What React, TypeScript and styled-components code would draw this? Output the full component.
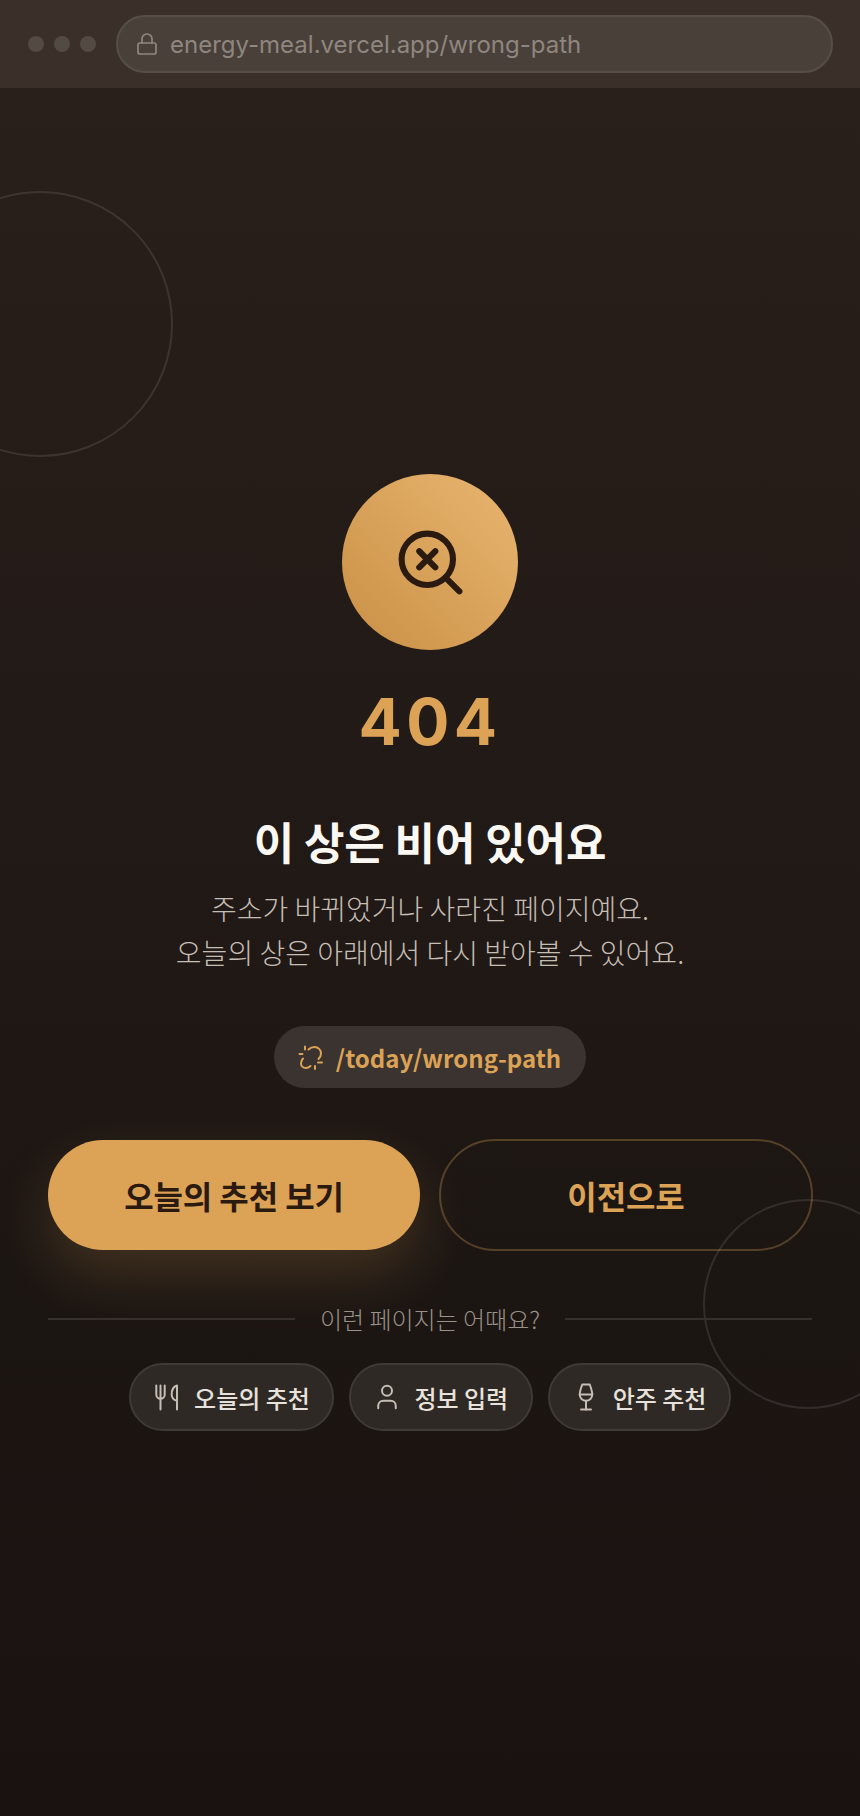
import React from "react";
import styled, { createGlobalStyle } from "styled-components";
import { Lock, SearchX, User, Wine } from "lucide-react";

const Global = createGlobalStyle`
  html, body { margin: 0; padding: 0; background: #1a1210; }
  * { box-sizing: border-box; }
`;

const Page = styled.div`
  position: relative;
  width: 860px;
  height: 1816px;
  overflow: hidden;
  display: flex;
  flex-direction: column;
  background: linear-gradient(180deg, #2a201b 0%, #1c1613 70%, #1a1210 100%);
  font-family: Inter, "Noto Sans CJK KR", sans-serif;
`;

const Ring = styled.div<{ $size: number; $left: number; $top: number }>`
  position: absolute;
  width: ${(p) => p.$size}px;
  height: ${(p) => p.$size}px;
  left: ${(p) => p.$left}px;
  top: ${(p) => p.$top}px;
  border-radius: 50%;
  border: 2px solid rgba(255, 255, 255, 0.1);
  pointer-events: none;
`;

const BrowserBar = styled.div`
  height: 88px;
  flex: none;
  display: flex;
  align-items: center;
  gap: 20px;
  padding: 0 27px 0 28px;
  background: #3a2f29;
`;

const Dots = styled.div`
  display: flex;
  gap: 10px;
`;

const Dot = styled.span`
  width: 16px;
  height: 16px;
  border-radius: 50%;
  background: #544a44;
`;

const Address = styled.div`
  flex: 1;
  height: 58px;
  display: flex;
  align-items: center;
  gap: 11px;
  padding: 0 17px;
  border-radius: 29px;
  background: #4a403a;
  border: 2px solid #574e48;
  color: #8f867f;
  font-size: 24px;
  svg { color: #8f867f; }
`;

const Main = styled.main`
  position: relative;
  display: flex;
  flex-direction: column;
  align-items: center;
  padding: 386px 48px 0;
`;

const Medal = styled.div`
  width: 176px;
  height: 176px;
  border-radius: 50%;
  display: flex;
  align-items: center;
  justify-content: center;
  background: linear-gradient(225deg, #e9b670 0%, #c98f45 100%);
  color: #2a1a10;
`;

const Code = styled.div`
  margin-top: 30px;
  font-size: 64px;
  line-height: 84px;
  font-weight: 750;
  letter-spacing: 4.5px;
  color: #dca256;
`;

const Title = styled.h1`
  margin: 47px 0 0;
  font-family: "Noto Sans CJK KR", sans-serif;
  font-size: 44px;
  line-height: 60px;
  font-weight: 700;
  letter-spacing: -0.1px;
  color: #fbf7f2;
`;

const Lead = styled.p`
  margin: 15px 0 0;
  font-family: "Noto Sans CJK KR", sans-serif;
  font-size: 28px;
  line-height: 44px;
  font-weight: 300;
  text-align: center;
  letter-spacing: 0.02px;
  color: #c6bdb5;
`;

const PathChip = styled.div`
  margin-top: 52px;
  height: 62px;
  display: flex;
  align-items: center;
  gap: 12px;
  padding: 0 25px 0 24px;
  border-radius: 31px;
  background: #3a332f;
  font-family: "Noto Sans CJK KR", sans-serif;
  font-size: 24px;
  font-weight: 700;
  color: #dca256;
`;

const Actions = styled.div`
  align-self: stretch;
  margin-top: 52px;
  display: grid;
  grid-template-columns: 1fr 1fr;
  gap: 20px;
`;

const Button = styled.button<{ $primary?: boolean }>`
  height: ${(p) => (p.$primary ? "110px" : "112px")};
  margin: ${(p) => (p.$primary ? "0" : "-1px")};
  border-radius: 56px;
  font-family: "Noto Sans CJK KR", sans-serif;
  font-size: 32px;
  font-weight: 700;
  letter-spacing: -0.1px;
  color: ${(p) => (p.$primary ? "#2a1a10" : "#dca256")};
  background: ${(p) => (p.$primary ? "#dca256" : "transparent")};
  border: ${(p) => (p.$primary ? "none" : "2px solid rgba(220, 162, 86, 0.3)")};
  box-shadow: ${(p) => (p.$primary ? "0 24px 56px rgba(220, 162, 86, 0.2)" : "none")};
`;

const DividerRow = styled.div`
  align-self: stretch;
  margin-top: 51px;
  display: flex;
  align-items: center;
  gap: 25px;
  font-family: "Noto Sans CJK KR", sans-serif;
  font-size: 24px;
  line-height: 36px;
  font-weight: 300;
  color: #9a9188;
`;

const Rule = styled.span`
  flex: 1;
  height: 2px;
  background: #35302c;
`;

const Links = styled.div`
  margin-top: 26px;
  display: flex;
  gap: 15px;
`;

const LinkChip = styled.a`
  height: 68px;
  display: flex;
  align-items: center;
  gap: 12px;
  padding: 0 22.5px 0 21px;
  border-radius: 34px;
  background: #2e2925;
  border: 2px solid #3f3a36;
  font-family: "Noto Sans CJK KR", sans-serif;
  font-size: 24px;
  font-weight: 500;
  color: #e8e2dc;
  svg { color: #c6bdb5; flex: none; }
`;

const BrokenLink = () => (
  <svg width="26" height="26" viewBox="0 0 26 26" fill="none" stroke="currentColor" strokeWidth="2" strokeLinecap="round">
    <path d="M10.5 5.5C12 4 14 3 16.5 3c3.7 0 6.5 2.8 6.5 6.5 0 2-.8 3.800-2.500 5.500" />
    <path d="M5 14.500C3.700 16 3 17.500 3 19.200 3 22 5 24 7.800 24c1.700 0 3.200-.6 4.700-2" />
    <path d="M7 2.500v3M1.500 10h3M20 18.500h4M17 22v3" />
  </svg>
);

const Cutlery = () => (
  <svg width="30" height="30" viewBox="0 0 30 30" fill="none" stroke="currentColor" strokeWidth="2" strokeLinecap="round" strokeLinejoin="round">
    <path d="M4.300 3.500v9a4.200 4.200 0 0 0 8.400 0v-9M8.500 3.500v24" />
    <path d="M25 27.500v-24c-3.500 1-5.300 4-5.300 9 0 3 2 6 5.300 6" />
  </svg>
);

export default function App() {
  return (
    <Page>
      <Global />
      <BrowserBar>
        <Dots>
          <Dot />
          <Dot />
          <Dot />
        </Dots>
        <Address>
          <Lock size={24} strokeWidth={1.7} />
          energy-meal.vercel.app/wrong-path
        </Address>
      </BrowserBar>
      <Ring $size={266} $left={-93} $top={191} />
      <Ring $size={210} $left={703} $top={1199} />
      <Main>
        <Medal>
          <SearchX size={77} strokeWidth={1.9} />
        </Medal>
        <Code>404</Code>
        <Title>이 상은 비어 있어요</Title>
        <Lead>
          주소가 바뀌었거나 사라진 페이지예요.
          <br />
          오늘의 상은 아래에서 다시 받아볼 수 있어요.
        </Lead>
        <PathChip>
          <BrokenLink />
          /today/wrong-path
        </PathChip>
        <Actions>
          <Button $primary>오늘의 추천 보기</Button>
          <Button>이전으로</Button>
        </Actions>
        <DividerRow>
          <Rule />
          이런 페이지는 어때요?
          <Rule />
        </DividerRow>
        <Links>
          <LinkChip>
            <Cutlery />
            오늘의 추천
          </LinkChip>
          <LinkChip>
            <User size={30} strokeWidth={1.6} />
            정보 입력
          </LinkChip>
          <LinkChip>
            <Wine size={30} strokeWidth={1.6} />
            안주 추천
          </LinkChip>
        </Links>
      </Main>
    </Page>
  );
}
